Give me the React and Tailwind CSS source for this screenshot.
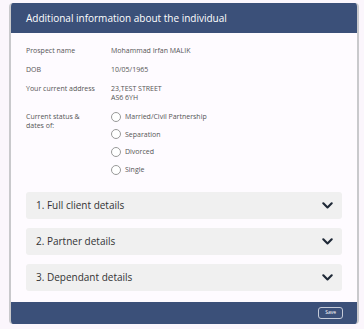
import React from "react";

const fields = [
  { label: "Prospect name", value: ["Mohammad Irfan MALIK"] },
  { label: "DOB", value: ["10/05/1965"] },
  { label: "Your current address", value: ["23,TEST STREET", "AS6 6YH"] },
];

const statuses = ["Married/Civil Partnership", "Separation", "Divorced", "Single"];
const sections = ["1. Full client details", "2. Partner details", "3. Dependant details"];

const Chevron = () => (
  <svg width="11" height="7" viewBox="0 0 11 7" fill="none">
    <path d="M1.3 1.3 5.5 5.5l4.2-4.2" stroke="#1f2937" strokeWidth="2.1" strokeLinecap="round" strokeLinejoin="round" />
  </svg>
);

const App = () => {
  return (
    <div
      className="w-[364px] h-[329px] bg-[#fbf6fc] pt-[3px] pl-[9px]"
      style={{ fontFamily: "'Open Sans', sans-serif" }}
    >
      <div className="w-[350px] rounded-[4px] overflow-hidden border-l-2 border-r-2 border-[#c9c9cc] bg-[#fefbff]">
        <div className="h-[30px] bg-[#3b5079] flex items-center pl-[15px] text-white text-[10px]">
          Additional information about the individual
        </div>

        <div className="px-[15px] pt-[13px] pb-[11px]">
          {fields.map((f) => (
            <div key={f.label} className="flex text-[7px] leading-[9px] text-[#555] mb-[10px]">
              <div className="w-[85px]">{f.label}</div>
              <div>
                {f.value.map((v) => (
                  <div key={v}>{v}</div>
                ))}
              </div>
            </div>
          ))}

          <div className="flex text-[7px] leading-[9px] text-[#555] mt-[1px]">
            <div className="w-[85px]">
              Current status &amp;
              <br />
              dates of:
            </div>
            <div className="flex flex-col gap-[7.7px] -mt-[0.5px]">
              {statuses.map((s) => (
                <label key={s} className="flex items-center gap-[4px]">
                  <span className="w-[10px] h-[10px] rounded-full border border-[#999] bg-white" />
                  <span>{s}</span>
                </label>
              ))}
            </div>
          </div>

          <div className="flex flex-col gap-[9px] mt-[17px]">
            {sections.map((s) => (
              <div
                key={s}
                className="h-[27px] bg-[#f0f0f0] rounded-[3px] flex items-center justify-between pl-[10px] pr-[9px] text-[10px] text-[#333]"
              >
                <span>{s}</span>
                <Chevron />
              </div>
            ))}
          </div>
        </div>

        <div className="h-[22px] bg-[#3b5079] flex items-center justify-end pr-[14px]">
          <button className="h-[12px] px-[6px] border border-[#c5cbd8] rounded-[3px] text-white text-[5px] leading-none">
            Save
          </button>
        </div>
      </div>
    </div>
  );
};

export default App;
